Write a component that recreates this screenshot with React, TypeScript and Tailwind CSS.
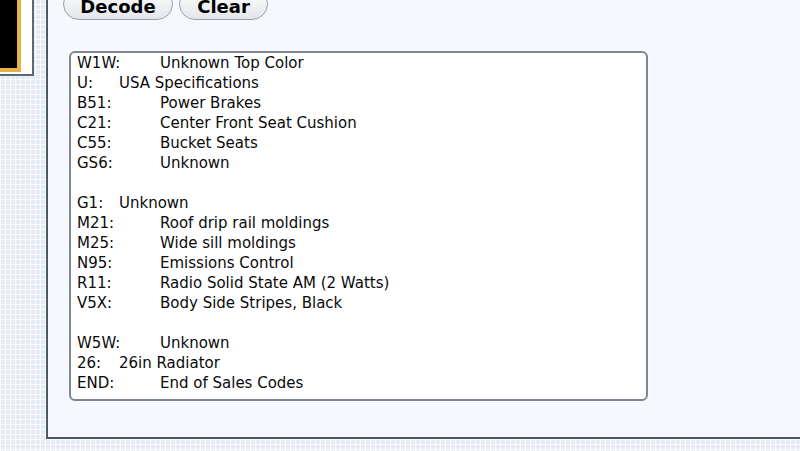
import React from "react";

const rows: { code: string; desc: string; w: number }[] = [
  { code: "W1W:", desc: "Unknown Top Color", w: 83 },
  { code: "U:", desc: "USA Specifications", w: 42 },
  { code: "B51:", desc: "Power Brakes", w: 83 },
  { code: "C21:", desc: "Center Front Seat Cushion", w: 83 },
  { code: "C55:", desc: "Bucket Seats", w: 83 },
  { code: "GS6:", desc: "Unknown", w: 83 },
  { code: "", desc: "", w: 0 },
  { code: "G1:", desc: "Unknown", w: 42 },
  { code: "M21:", desc: "Roof drip rail moldings", w: 83 },
  { code: "M25:", desc: "Wide sill moldings", w: 83 },
  { code: "N95:", desc: "Emissions Control", w: 83 },
  { code: "R11:", desc: "Radio Solid State AM (2 Watts)", w: 83 },
  { code: "V5X:", desc: "Body Side Stripes, Black", w: 83 },
  { code: "", desc: "", w: 0 },
  { code: "W5W:", desc: "Unknown", w: 83 },
  { code: "26:", desc: "26in Radiator", w: 42 },
  { code: "END:", desc: "End of Sales Codes", w: 83 },
];

export default function App() {
  return (
    <div
      className="w-[800px] h-[451px] overflow-hidden flex flex-col bg-[#e6eaf3] bg-[linear-gradient(90deg,rgba(255,255,255,0.75)_1px,transparent_1px),linear-gradient(0deg,rgba(255,255,255,0.75)_1px,transparent_1px)] bg-[size:5px_5px]"
      style={{ fontFamily: '"DejaVu Sans", Verdana, sans-serif' }}
    >
      <div className="flex h-[439px]">
        {/* left strip */}
        <div className="w-[46px] shrink-0 relative">
          <div className="absolute left-0 top-[-10px] w-[34px] h-[86px] bg-white border-r-2 border-b-2 border-[#5a6878] pr-[11px] pb-[2px]">
            <div className="w-full h-full bg-black border-r-4 border-b-4 border-[#e8b04a]" />
          </div>
        </div>
        {/* main panel */}
        <div className="flex-1 bg-[#f5f8fe] border-l-2 border-b-2 border-[#4c5a68] flex flex-col">
          <div className="flex gap-[6px] pl-[15px] -mt-[12px]">
            <button className="w-[110px] h-[32px] rounded-full border border-[#9aa0a8] bg-[linear-gradient(#ffffff,#e4e6ea)] text-[18px] font-bold text-black leading-none pt-[6px]">
              Decode
            </button>
            <button className="w-[89px] h-[32px] rounded-full border border-[#9aa0a8] bg-[linear-gradient(#ffffff,#e4e6ea)] text-[18px] font-bold text-black leading-none pt-[6px]">
              Clear
            </button>
          </div>
          <div className="ml-[21px] mt-[31px] w-[579px] h-[350px] bg-white border-2 border-[#7d8791] rounded-[6px] pl-[6px] pt-0 text-[15px] leading-[20px] text-[#0a0a0a]">
            {rows.map((r, i) => (
              <div key={i} className="flex h-[20px] whitespace-pre">
                <span className="shrink-0" style={{ width: r.w }}>
                  {r.code}
                </span>
                <span>{r.desc}</span>
              </div>
            ))}
          </div>
        </div>
      </div>
    </div>
  );
}
